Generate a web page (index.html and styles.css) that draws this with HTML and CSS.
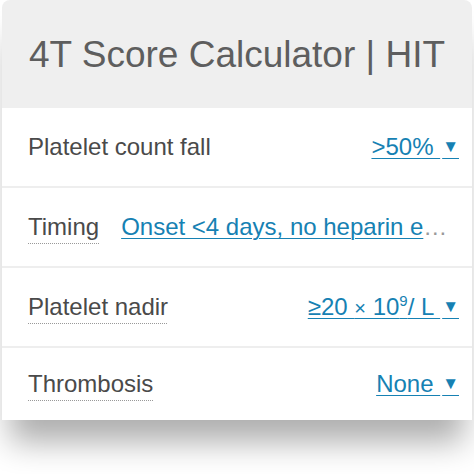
FILE: index.html
```html
<!DOCTYPE html>
<html lang="en">
<head>
    <meta charset="UTF-8">
    <meta name="viewport" content="width=device-width, initial-scale=1.0">
    <title>4T Score Calculator | HIT</title>
    <link rel="stylesheet" href="styles.css">
</head>
<body>
    <div class="calculator">
        <div class="calc-header">
            <h1>4T Score Calculator | HIT</h1>
        </div>

        <div class="calc-row">
            <span class="calc-label">Platelet count fall</span>
            <span class="calc-value"><a class="select">&gt;50% <span class="arrow">&#9660;</span></a></span>
        </div>

        <div class="calc-row">
            <span class="calc-label hint">Timing</span>
            <span class="calc-value truncate"><a class="select">Onset &lt;4 days, no heparin exposure within 100 days</a></span>
        </div>

        <div class="calc-row">
            <span class="calc-label hint">Platelet nadir</span>
            <span class="calc-value"><a class="select">&ge;20 <span class="times">&times;</span> 10<sup>9</sup>/ L <span class="arrow">&#9660;</span></a></span>
        </div>

        <div class="calc-row">
            <span class="calc-label hint">Thrombosis</span>
            <span class="calc-value"><a class="select">None <span class="arrow">&#9660;</span></a></span>
        </div>
    </div>
</body>
</html>
```

FILE: styles.css
```css
body {
    font-family: "Liberation Sans", Arial, Helvetica, sans-serif;
    margin: 0;
    padding: 0 2px 54px;
    background-color: #fff;
}

.calculator {
    background-color: #fff;
    border-radius: 8px 8px 0 0;
    box-shadow: 0 30px 30px -8px rgba(0,0,0,0.32);
    height: 420px;
}

.calc-header {
    background-color: #efefef;
    border-radius: 8px 8px 0 0;
    height: 108px;
    display: flex;
    align-items: center;
    justify-content: center;
}

.calc-header h1 {
    margin: 0;
    font-size: 37px;
    font-weight: normal;
    color: #5e5e5e;
    padding-top: 2px;
}

.calc-row {
    display: flex;
    align-items: center;
    justify-content: space-between;
    height: 78px;
    padding: 0 13px 0 26px;
    border-bottom: 2px solid #eeeeee;
    font-size: 24px;
}

.calc-row:last-child {
    border-bottom: none;
    height: 72px;
}

.calc-label {
    color: #4a4a4a;
    white-space: nowrap;
    flex-shrink: 0;
}

.calc-label.hint {
    text-decoration: underline dotted #999;
    text-decoration-thickness: 1px;
    text-underline-offset: 8px;
}

.calc-value {
    margin-left: 22px;
    white-space: nowrap;
    min-width: 0;
}

.calc-value.truncate {
    overflow: hidden;
    text-overflow: ellipsis;
    color: #999;
    padding-right: 10px;
}

.select {
    color: #1681b3;
    text-decoration: underline;
    text-underline-offset: 3px;
    text-decoration-thickness: 1px;
    cursor: pointer;
}

.select .times {
    font-size: 20px;
}

.select sup {
    font-size: 15px;
    line-height: 0;
}

.arrow {
    font-size: 17px;
    vertical-align: 3px;
    margin-left: 2px;
}
```
